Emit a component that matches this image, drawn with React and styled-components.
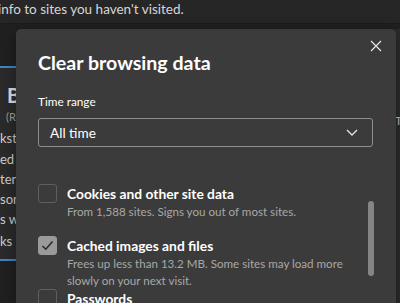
import React from "react";
import styled, { createGlobalStyle } from "styled-components";

const Global = createGlobalStyle`
  html, body { margin: 0; padding: 0; }
  body {
    width: 400px; height: 303px; overflow: hidden;
    background: #202020;
    font-family: Lato, "Noto Sans", sans-serif;
    color: #fff;
  }
`;

const Page = styled.div`
  position: relative;
  width: 400px;
  height: 303px;
  overflow: hidden;
`;

const TopBar = styled.div`
  height: 23px;
  background: #262626;
  border-bottom: 1px solid #1c1c1c;
  display: flex;
  align-items: center;
  overflow: hidden;
`;

const TopText = styled.span`
  font-size: 13.5px;
  color: #d6d6d6;
  white-space: nowrap;
  margin-left: -2px;
  margin-top: -6px;
`;

const Body = styled.div`
  display: flex;
  justify-content: space-between;
  height: 280px;
`;

const LeftCard = styled.div`
  width: 30px;
  margin-top: 42px;
  height: 177px;
  background: #2b2b2b;
  border-top: 2px solid #3f86c6;
  border-bottom: 2px solid #3f86c6;
  overflow: hidden;
  display: flex;
  flex-direction: column;
  padding-top: 14px;
`;

const BgLine = styled.div`
  font-size: ${(p) => p.$size || 13}px;
  font-weight: ${(p) => p.$weight || 400};
  color: ${(p) => p.$color || "#cfcfcf"};
  margin-left: ${(p) => p.$indent || 0}px;
  height: ${(p) => p.$h || 20}px;
  line-height: ${(p) => p.$h || 20}px;
  white-space: nowrap;
`;

const RightStrip = styled.div`
  width: 5px;
  background: #2c2c2c;
  margin-top: 5px;
  border-bottom: 1px solid #444;
  height: 238px;
  display: flex;
  flex-direction: column;
  padding-top: 84px;
  overflow: hidden;
`;

const Dialog = styled.div`
  position: absolute;
  left: 16px;
  top: 29px;
  width: 380px;
  height: 300px;
  background: #3b3b3b;
  border-radius: 5px;
  box-shadow: 0 4px 16px rgba(0, 0, 0, 0.4);
  padding: 0 22px;
  box-sizing: border-box;
`;

const Header = styled.div`
  display: flex;
  justify-content: space-between;
  align-items: flex-start;
  padding-top: 20px;
`;

const Title = styled.h1`
  margin: 0;
  font-size: 19.6px;
  font-weight: 700;
  line-height: 28px;
  color: #ffffff;
`;

const CloseBtn = styled.button`
  background: none;
  border: none;
  padding: 0;
  margin: -9px -8px 0 0;
  width: 12px;
  height: 12px;
  display: flex;
  cursor: pointer;
`;

const Label = styled.div`
  margin-top: 17px;
  font-size: 11.8px;
  color: #ffffff;
  line-height: 16px;
`;

const Select = styled.div`
  margin-top: 8px;
  height: 29px;
  width: 335px;
  box-sizing: border-box;
  border: 1.5px solid #8f8f8f;
  border-radius: 3px;
  display: flex;
  align-items: center;
  justify-content: space-between;
  padding: 0 14px 0 11px;
  font-size: 13.6px;
  color: #ffffff;
`;

const ListArea = styled.div`
  position: relative;
  margin-top: 37px;
  display: flex;
  flex-direction: column;
`;

const Item = styled.div`
  display: flex;
  gap: 10px;
  align-items: flex-start;
  min-height: 52px;
`;

const Box = styled.div`
  flex: none;
  width: 19px;
  height: 19px;
  box-sizing: border-box;
  border-radius: 3px;
  border: 1px solid ${(p) => (p.$checked ? "#9a9a9a" : "#5f5f5f")};
  background: ${(p) => (p.$checked ? "#9a9a9a" : "transparent")};
  display: flex;
  align-items: center;
  justify-content: center;
`;

const ItemText = styled.div`
  display: flex;
  flex-direction: column;
`;

const ItemTitle = styled.div`
  font-size: 13.8px;
  font-weight: 700;
  color: #ffffff;
  line-height: 19px;
`;

const ItemDesc = styled.div`
  font-size: 11.6px;
  color: #a8a8a8;
  line-height: 17px;
  width: 285px;
`;

const Scrollbar = styled.div`
  position: absolute;
  right: 0px;
  top: 17px;
  width: 6px;
  height: 75px;
  border-radius: 3px;
  background: #858585;
`;

const Check = () => (
  <svg width="13" height="11" viewBox="0 0 13 11">
    <path d="M1.5 6 L4.8 9.2 L11.5 1.5" fill="none" stroke="#2a2a2a" strokeWidth="1.6" />
  </svg>
);

export default function App() {
  return (
    <Page>
      <Global />
      <TopBar>
        <TopText>info to sites you haven't visited.</TopText>
      </TopBar>
      <Body>
        <LeftCard>
          <BgLine $size={20} $weight={700} $indent={7} $h={26} $color="#e0e0e0">Ba</BgLine>
          <BgLine $size={11} $indent={6} $h={18} $color="#a0a0a0">(Re</BgLine>
          <BgLine $h={24}>kst</BgLine>
          <BgLine $h={18}>ed</BgLine>
          <BgLine $h={22}>ten</BgLine>
          <BgLine $h={18}>sona</BgLine>
          <BgLine $h={22}>s wi</BgLine>
          <BgLine $h={22}>ks l</BgLine>
        </LeftCard>
        <RightStrip>
          <BgLine $size={12} $h={16} $color="#bbb">T</BgLine>
        </RightStrip>
      </Body>
      <Dialog>
        <Header>
          <Title>Clear browsing data</Title>
          <CloseBtn aria-label="Close">
            <svg width="12" height="12" viewBox="0 0 12 12">
              <path d="M1 1 L11 11 M11 1 L1 11" stroke="#e6e6e6" strokeWidth="1.2" />
            </svg>
          </CloseBtn>
        </Header>
        <Label>Time range</Label>
        <Select>
          <span>All time</span>
          <svg width="12" height="7" viewBox="0 0 12 7">
            <path d="M1 1 L6 6 L11 1" fill="none" stroke="#e6e6e6" strokeWidth="1.3" />
          </svg>
        </Select>
        <ListArea>
          <Item>
            <Box />
            <ItemText>
              <ItemTitle>Cookies and other site data</ItemTitle>
              <ItemDesc>From 1,588 sites. Signs you out of most sites.</ItemDesc>
            </ItemText>
          </Item>
          <Item>
            <Box $checked>
              <Check />
            </Box>
            <ItemText>
              <ItemTitle>Cached images and files</ItemTitle>
              <ItemDesc>Frees up less than 13.2 MB. Some sites may load more slowly on your next visit.</ItemDesc>
            </ItemText>
          </Item>
          <Item>
            <Box />
            <ItemText>
              <ItemTitle>Passwords</ItemTitle>
            </ItemText>
          </Item>
          <Scrollbar />
        </ListArea>
      </Dialog>
    </Page>
  );
}
